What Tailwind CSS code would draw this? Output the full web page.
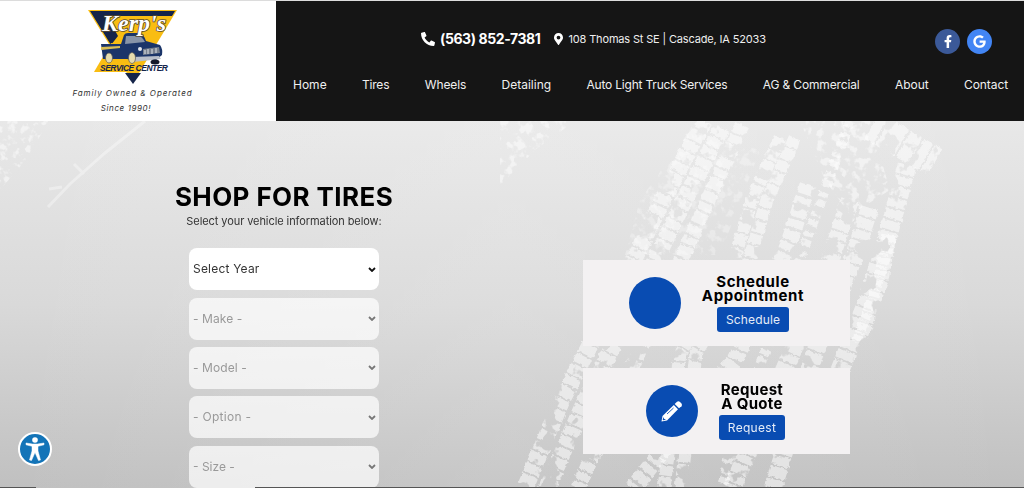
<!doctype html>
<html lang="en">

<head>
    <meta charset="UTF-8">
    <meta name="viewport" content="width=device-width, initial-scale=1.0">
    <title>Kerp's Service Center</title>
    <script src="https://cdn.jsdelivr.net/npm/@tailwindcss/browser@4"></script>
</head>

<body class="h-[488px] overflow-hidden bg-white font-['Inter','Liberation_Sans',sans-serif] text-black">
    <header class="flex h-[121px] border-t border-[#dcdcdc]">
        <div class="flex w-[276px] shrink-0 flex-col items-center bg-white pr-[11px] pt-[7px]">
            <svg class="h-[76px] w-[92px]" viewBox="0 0 92 76">
                <path d="M1 2H90L46 75Z" fill="#f9bd12" />
                <path d="M3 3H88L85 8H20L31 28L24 37Z" fill="#14244a" />
                <path d="M24 35L7 64H53L60 40Z" fill="#f9bd12" />
                <path d="M38 65H54L46 76Z" fill="#14244a" />
                <path d="M14 36H34L37 27Q38 25 41 25H53Q56 25 59 33L73 37Q76 41 75 47L69 52H45L40 51H16Z" fill="#1b3569" />
                <path d="M39 28H51Q55 28 58 34L38 36Z" fill="#8794a8" />
                <path d="M14 39L33 38V40L14 42Z" fill="#d9bd54" />
                <path d="M44 49L72 48L74 51L46 54Z" fill="#b9bfc9" />
                <path d="M56 41L72 39L73 45L56 47Z" fill="#77808e" />
                <path d="M58 42V46M61 41V46M65 41V46M69 40V45" stroke="#dfe3e8" />
                <circle cx="53" cy="41" r="2" fill="#e4e8ee" />
                <ellipse cx="22" cy="50" rx="3.500" ry="5" fill="#e6dcae" stroke="#555" stroke-width="0.700" />
                <ellipse cx="45" cy="50" rx="3.500" ry="5.500" fill="#e6dcae" stroke="#555" stroke-width="0.700" />
                <ellipse cx="68" cy="54" rx="4.500" ry="2.500" fill="#15192a" />
                <text x="15" y="23" textLength="64" lengthAdjust="spacingAndGlyphs" font-family="Liberation Serif, serif" font-size="24" font-style="italic" font-weight="bold" fill="#fff" stroke="#5a4a30" stroke-width="1.600" paint-order="stroke">Kerp's</text>
                <text x="13" y="63" textLength="68" font-family="Liberation Sans, sans-serif" font-size="8.500" font-style="italic" font-weight="bold" fill="#14244a">SERVICE CENTER</text>
            </svg>
            <p class="mt-[2px] text-center text-[8px] leading-[14.500px] tracking-[0.9px] text-[#333] italic">Family Owned &amp; Operated</p>
            <p class="pr-[13px] text-center text-[8px] leading-[14.500px] tracking-[0.6px] text-[#333] italic">Since 1990!</p>
        </div>
        <div class="flex-1 bg-[#151515] text-white">
            <div class="flex h-[64px] items-center pl-[145px] pt-[11px]">
                <svg class="h-[14px] w-[14px]" viewBox="0 0 512 512" fill="currentColor">
                    <path d="M493 25L389 1c-11-3-23 3-27 14l-48 112c-4 10-1 21 7 28l61 50c-36 77-98 140-177 177l-50-61c-7-8-18-11-28-7L15 362c-11 4-17 16-14 27l24 104c3 11 12 19 24 19 256 0 463-207 463-463 0-12-8-21-19-24z" transform="translate(512 0) scale(-1 1)" />
                </svg>
                <span class="ml-[5px] text-[14px] font-bold tracking-[-0.400px]">(563) 852-7381</span>
                <svg class="ml-[14px] h-[12px] w-[9px]" viewBox="0 0 384 512" fill="currentColor">
                    <path fill-rule="evenodd" d="M172 502C27 291 0 270 0 192 0 86 86 0 192 0s192 86 192 192c0 78-27 99-172 310-10 13-30 13-40 0zM192 272a80 80 0 1 0 0-160 80 80 0 0 0 0 160z" />
                </svg>
                <span class="ml-[5px] pt-[2px] text-[11px] tracking-[-0.160px] text-[#eee]">108 Thomas St SE | Cascade, IA 52033</span>
                <div class="ml-auto flex gap-[7px] pr-[32px] pt-[6px]">
                    <a class="flex size-[25px] items-center justify-center rounded-full bg-[#3b5998]">
                        <svg class="h-[13px] w-[8px]" viewBox="0 0 320 512" fill="currentColor">
                            <path d="M279 288l14-93h-89v-60c0-25 12-50 52-50h41V6s-37-6-72-6c-73 0-121 44-121 125v70H23v93h81v224h100V288z" />
                        </svg>
                    </a>
                    <a class="flex size-[25px] items-center justify-center rounded-full bg-[#4285f4]">
                        <svg class="h-[13px] w-[13px]" viewBox="0 0 488 512" fill="currentColor">
                            <path d="M488 262c0 142-97 242-240 242C111 504 0 393 0 256S111 8 248 8c67 0 123 25 166 65l-67 65C259 53 94 117 94 256c0 86 69 156 154 156 98 0 135-70 141-107H248v-85h236c2 13 4 25 4 42z" />
                        </svg>
                    </a>
                </div>
            </div>
            <nav class="flex justify-between pl-[17px] pr-[16px] pt-[10px] text-[12px] leading-[20px] whitespace-nowrap text-[#f0f0f0]">
                <a>Home</a>
                <a class="tracking-[-0.200px]">Tires</a>
                <a class="tracking-[-0.100px]">Wheels</a>
                <a>Detailing</a>
                <a class="tracking-[-0.200px]">Auto Light Truck Services</a>
                <a class="tracking-[-0.150px]">AG &amp; Commercial</a>
                <a>About</a>
                <a class="tracking-[-0.100px]">Contact</a>
            </nav>
        </div>
    </header>

    <main class="relative h-[367px] overflow-hidden bg-linear-to-b from-[#e8e8e8] via-[#d9d9d9] to-[#c0c0c0]">
        <!-- tyre marks on concrete -->
        <svg class="absolute inset-0" width="1024" height="367" viewBox="0 121 1024 367">
            <defs>
                <filter id="rough" x="0" y="121" width="1024" height="367" filterUnits="userSpaceOnUse">
                    <feTurbulence type="fractalNoise" baseFrequency="0.25" numOctaves="2" seed="4" result="n" />
                    <feDisplacementMap in="SourceGraphic" in2="n" scale="4" xChannelSelector="R" yChannelSelector="G" result="d" />
                    <feTurbulence type="fractalNoise" baseFrequency="0.050" numOctaves="4" seed="9" />
                    <feColorMatrix values="0 0 0 0 1  0 0 0 0 1  0 0 0 0 1  16 0 0 0 -6" />
                    <feComposite in2="d" operator="in" result="c" />
                    <feGaussianBlur in="c" stdDeviation="0.500" />
                </filter>
                <filter id="specks" x="0" y="121" width="1024" height="367" filterUnits="userSpaceOnUse">
                    <feTurbulence type="fractalNoise" baseFrequency="0.120" numOctaves="3" seed="3" />
                    <feColorMatrix values="0 0 0 0 1  0 0 0 0 1  0 0 0 0 1  6 0 0 0 -3" />
                    <feComposite in2="SourceGraphic" operator="in" />
                    <feGaussianBlur stdDeviation="0.600" />
                </filter>
                <linearGradient id="edge">
                    <stop offset="0" stop-color="#fff" stop-opacity="0" />
                    <stop offset="0.500" stop-color="#fff" stop-opacity="0.120" />
                    <stop offset="1" stop-color="#fff" stop-opacity="0" />
                </linearGradient>
            </defs>
            <rect y="121" width="1024" height="367" fill="url(#edge)" />
            <g filter="url(#rough)" fill="none" stroke="#fff" stroke-opacity="0.520">
                <path d="M704 121L665 195L636 255L562 400L520 500" stroke-width="17" stroke-dasharray="9 2 11 2" />
                <path d="M722 128L683 203L654 263L582 408L542 500" stroke-width="17" stroke-dasharray="10 2 9 2" />
                <path d="M742 125L700 218L640 350L578 488" stroke-width="15" stroke-dasharray="10 2 8 2 12 3" />
                <path d="M780 138L752 200L731 270L680 353L664 488" stroke-width="13" stroke-dasharray="12 2 10 2" />
                <path d="M795 138L767 200L746 270L696 353L681 488" stroke-width="13" stroke-dasharray="10 2 12 2" />
                <path d="M808 185L790 240L735 360L633 488" stroke-width="17" stroke-dasharray="10 3 8 3" />
                <path d="M850 121L785 300L735 430L722 488" stroke-width="10" stroke-dasharray="7 6 5 3" />
                <path d="M850 200L832 255L793 350L732 488" stroke-width="18" stroke-dasharray="10 2 8 2" />
                <path d="M870 208L852 262L814 355L773 488" stroke-width="18" stroke-dasharray="9 2 11 2" />
                <path d="M872 126L935 162" stroke-width="30" stroke-dasharray="10 2 22 2 14 2" />
                <path d="M907 165L890 228L868 300L838 375" stroke-width="19" stroke-dasharray="10 2 9 2" />
                <path d="M889 235L881 280L858 345" stroke-width="15" stroke-dasharray="11 2 8 2" />
            </g>
            <g filter="url(#specks)" opacity="0.500">
                <path d="M0 121H48L30 155L0 190Z" />
                <path d="M500 121H575L535 150L508 178L500 190Z" />
                <path d="M800 121H870L890 190L850 215L825 180Z" />
                <path d="M690 130L640 200L625 255L720 255L760 150Z" opacity="0.600" />
            </g>
            <path d="M145 121L105 153L70 184L48 207M74 164L84 174M49 189L62 187" fill="none" stroke="#fff" stroke-opacity="0.350" stroke-width="3" />
        </svg>

        <div class="relative flex">
            <section class="ml-[174px] flex w-[220px] flex-col items-center pt-[61px]">
                <h1 class="text-[26px] leading-[30px] font-bold tracking-[0.400px] whitespace-nowrap">SHOP FOR TIRES</h1>
                <p class="mt-[1px] text-[11px] leading-[16px] tracking-[-0.080px] whitespace-nowrap text-[#333]">Select your vehicle information below:</p>
                <form class="mt-[19.400px] flex w-[190px] flex-col gap-[7.300px] text-[12px]">
                    <div class="flex h-[42px] items-center justify-between rounded-[8px] bg-white pl-[4px] pr-[3px] text-[#333]">
                        <span class="tracking-[0.200px]">Select Year</span>
                        <svg class="h-[5px] w-[8px]" viewBox="0 0 8 5" fill="none" stroke="#111" stroke-width="1.800"><path d="M1 1L4 4L7 1" /></svg>
                    </div>
                    <div class="flex h-[42px] items-center justify-between rounded-[8px] bg-white/70 pl-[4px] pr-[3px] text-[#999]">
                        <span class="tracking-[0.100px]">- Make -</span>
                        <svg class="h-[5px] w-[8px]" viewBox="0 0 8 5" fill="none" stroke="#777" stroke-width="1.800"><path d="M1 1L4 4L7 1" /></svg>
                    </div>
                    <div class="flex h-[42px] items-center justify-between rounded-[8px] bg-white/70 pl-[4px] pr-[3px] text-[#999]">
                        <span class="tracking-[0.100px]">- Model -</span>
                        <svg class="h-[5px] w-[8px]" viewBox="0 0 8 5" fill="none" stroke="#777" stroke-width="1.800"><path d="M1 1L4 4L7 1" /></svg>
                    </div>
                    <div class="flex h-[42px] items-center justify-between rounded-[8px] bg-white/70 pl-[4px] pr-[3px] text-[#999]">
                        <span class="tracking-[0.300px]">- Option -</span>
                        <svg class="h-[5px] w-[8px]" viewBox="0 0 8 5" fill="none" stroke="#777" stroke-width="1.800"><path d="M1 1L4 4L7 1" /></svg>
                    </div>
                    <div class="flex h-[42px] items-center justify-between rounded-[8px] bg-white/70 pl-[4px] pr-[3px] text-[#999]">
                        <span>- Size -</span>
                        <svg class="h-[5px] w-[8px]" viewBox="0 0 8 5" fill="none" stroke="#777" stroke-width="1.800"><path d="M1 1L4 4L7 1" /></svg>
                    </div>
                </form>
            </section>

            <section class="ml-[189px] flex w-[267px] flex-col gap-[22px] pt-[139px]">
                <div class="flex h-[86px] items-center justify-center gap-[21px] bg-[#f3f1f2]">
                    <div class="size-[52px] rounded-full bg-[#094cb2]"></div>
                    <div class="flex flex-col items-center">
                        <h2 class="text-center text-[15px] leading-[14.500px] font-bold tracking-[0.600px]">Schedule<br>Appointment</h2>
                        <a class="mt-[3px] rounded-[3px] bg-[#094cb2] px-[9px] text-[12px] leading-[25px] tracking-[0.150px] text-[#e6edf8]">Schedule</a>
                    </div>
                </div>
                <div class="flex h-[86px] items-center justify-center gap-[21px] bg-[#f3f1f2] pr-[2px]">
                    <div class="flex size-[52px] items-center justify-center rounded-full bg-[#094cb2]">
                        <svg class="size-[22px]" viewBox="0 0 22 22">
                            <path d="M0.500 21.500L1.500 16L12.800 5L17 9.200L6 20.500Z" fill="#fff" />
                            <path d="M13.700 4L16 1.800Q17.500 0.700 19 2L20.500 3.500Q21.500 5 20.500 6.200L18 8.300Z" fill="#fff" />
                            <path d="M6 14L12.500 8" stroke="#094cb2" stroke-width="0.900" />
                            <path d="M2.300 17L3 18.800L5 19.700L2.200 20.200L1.700 19.700Z" fill="#094cb2" />
                        </svg>
                    </div>
                    <div class="flex flex-col items-center">
                        <h2 class="text-center text-[15px] leading-[14.500px] font-bold tracking-[0.300px]">Request<br>A Quote</h2>
                        <a class="mt-[3px] rounded-[3px] bg-[#094cb2] px-[9px] text-[12px] leading-[25px] tracking-[0.300px] text-[#e6edf8]">Request</a>
                    </div>
                </div>
            </section>
        </div>

        <!-- accessibility button -->
        <a class="absolute top-[311px] left-[18px] flex size-[34px] items-center justify-center rounded-full border-2 border-white bg-[#1374b8]">
            <svg class="size-[26px]" viewBox="0 0 26 26" fill="#fff">
                <circle cx="13" cy="4" r="2.800" />
                <path d="M4 7L10.500 8H15.500L22 7V8.800L16 10.300V15L18.500 24L16.500 24.500L13 16.500L9.500 24.500L7.500 24L10 15V10.300L4 8.800Z" stroke="#fff" stroke-width="0.500" />
            </svg>
        </a>
        <div class="absolute bottom-0 left-0 h-px w-[36px] bg-[#555]"></div>
        <div class="absolute right-0 bottom-0 left-[255px] h-px bg-[#555]"></div>
    </main>
</body>

</html>
